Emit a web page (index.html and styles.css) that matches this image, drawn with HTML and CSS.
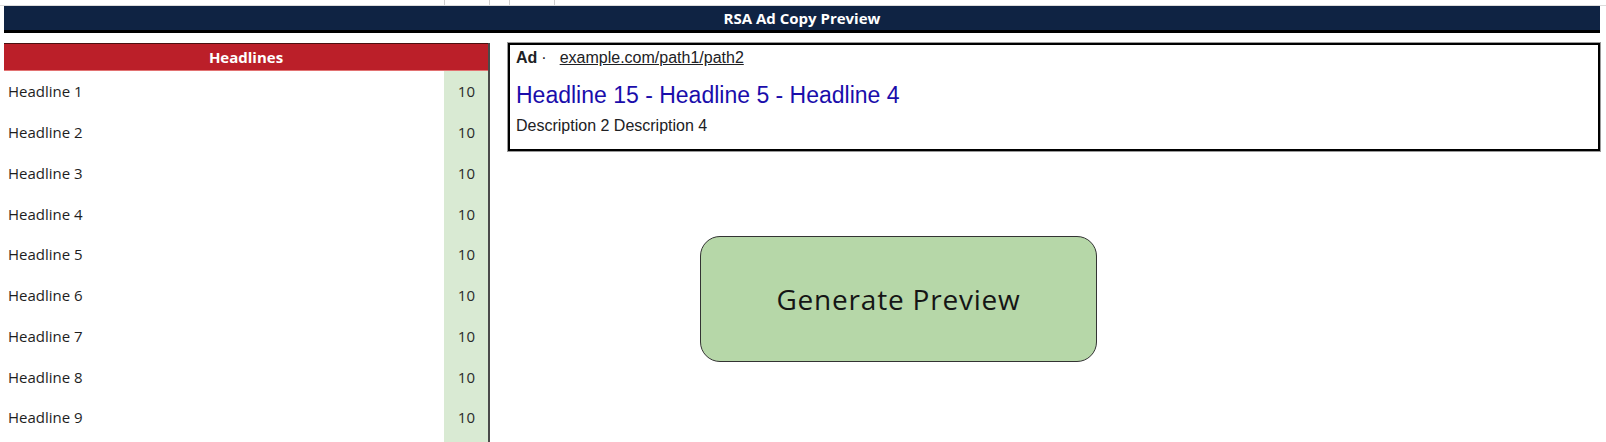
FILE: index.html
```html
<!DOCTYPE html>
<html>
<head>
<meta charset="utf-8">
<link rel="stylesheet" href="styles.css">
</head>
<body>
<div class="sheet">
  <div class="gridtop">
    <span class="gcell g1"></span><span class="gcell g2"></span><span class="gcell g3"></span><span class="gcell g4"></span><span class="gcell g5"></span>
  </div>
  <header class="titlebar">RSA Ad Copy Preview</header>
  <div class="main">
    <section class="headlines">
      <div class="hl-head">Headlines</div>
      <div class="hl-row"><span class="hl-name">Headline 1</span><span class="hl-count">10</span></div>
      <div class="hl-row"><span class="hl-name">Headline 2</span><span class="hl-count">10</span></div>
      <div class="hl-row"><span class="hl-name">Headline 3</span><span class="hl-count">10</span></div>
      <div class="hl-row"><span class="hl-name">Headline 4</span><span class="hl-count">10</span></div>
      <div class="hl-row"><span class="hl-name">Headline 5</span><span class="hl-count">10</span></div>
      <div class="hl-row"><span class="hl-name">Headline 6</span><span class="hl-count">10</span></div>
      <div class="hl-row"><span class="hl-name">Headline 7</span><span class="hl-count">10</span></div>
      <div class="hl-row"><span class="hl-name">Headline 8</span><span class="hl-count">10</span></div>
      <div class="hl-row"><span class="hl-name">Headline 9</span><span class="hl-count">10</span></div>
      <div class="hl-row"><span class="hl-name"></span><span class="hl-count"></span></div>
    </section>
    <section class="preview">
      <div class="adbox">
        <div class="ad-top"><span class="ad-label">Ad</span><span class="ad-dot">·</span><span class="ad-url">example.com/path1/path2</span></div>
        <div class="ad-headline">Headline 15 - Headline 5 - Headline 4</div>
        <div class="ad-desc">Description 2 Description 4</div>
      </div>
      <div class="btn">Generate Preview</div>
    </section>
  </div>
</div>
</body>
</html>
```

FILE: styles.css
```css
html, body {
  margin: 0;
  padding: 0;
  height: 442px;
  overflow: hidden;
  background: #ffffff;
}

.sheet {
  width: 1606px;
  height: 442px;
  overflow: hidden;
}

.gridtop {
  height: 5px;
  display: flex;
  border-bottom: 1px solid #dcdcdc;
}

.gcell {
  height: 5px;
  border-right: 1px solid #cfcfcf;
  box-sizing: border-box;
}
.g1 { width: 445px; }
.g2 { width: 45px; }
.g3 { width: 20px; }
.g4 { width: 45px; }
.g5 { flex: 1; border-right: none; }

.titlebar {
  margin-left: 4px;
  width: 1596px;
  height: 24px;
  background: #0f2343;
  border-bottom: 3px solid #000000;
  color: #ffffff;
  font-family: "Open Sans", "Liberation Sans", sans-serif;
  font-weight: 700;
  font-size: 15px;
  display: flex;
  align-items: center;
  justify-content: center;
}

.main {
  display: flex;
  margin-top: 10px;
  padding-left: 4px;
  gap: 18px;
}

.headlines {
  width: 484px;
  height: 400px;
  border-right: 2px solid #4a4a4a;
  flex-shrink: 0;
  font-family: "Open Sans", "Liberation Sans", sans-serif;
}

.hl-head {
  height: 26px;
  background: #bb1f29;
  border-top: 1px solid #4a1010;
  border-bottom: 1px solid #e27272;
  color: #ffffff;
  font-weight: 700;
  font-size: 15px;
  display: flex;
  align-items: center;
  justify-content: center;
}

.hl-row {
  height: 40.75px;
  display: flex;
}

.hl-name {
  flex: 1;
  padding-left: 4px;
  display: flex;
  align-items: center;
  font-size: 15px;
  color: #1e1e1e;
}

.hl-count {
  width: 44px;
  box-sizing: border-box;
  background: #d9ead3;
  padding-right: 13px;
  display: flex;
  align-items: center;
  justify-content: flex-end;
  font-size: 15px;
  color: #2a2a2a;
}

.preview {
  flex: 1;
  margin-right: 6px;
  display: flex;
  flex-direction: column;
  align-items: flex-start;
}

.adbox {
  align-self: stretch;
  height: 104px;
  border: 2px solid #000000;
  box-shadow: 0 0 0 1px #9a9a9a;
  padding-left: 6px;
  font-family: "Liberation Sans", Arial, sans-serif;
  color: #202124;
}

.ad-top {
  display: flex;
  align-items: center;
  margin-top: 3px;
  height: 20px;
  font-size: 16px;
}

.ad-label {
  font-weight: 700;
}

.ad-dot {
  margin-left: 4px;
  margin-right: 13px;
}

.ad-url {
  text-decoration: underline;
}

.ad-headline {
  margin-top: 14px;
  line-height: 26px;
  height: 26px;
  font-size: 23px;
  color: #1a0dab;
}

.ad-desc {
  margin-top: 8px;
  line-height: 20px;
  font-size: 16px;
  color: #202124;
}

.btn {
  margin-left: 192px;
  margin-top: 85px;
  width: 397px;
  height: 126px;
  box-sizing: border-box;
  border: 1px solid #333333;
  border-radius: 20px;
  background: #b6d7a8;
  display: flex;
  align-items: center;
  justify-content: center;
  font-family: "Open Sans", "Liberation Sans", sans-serif;
  font-size: 28px;
  letter-spacing: 0.8px;
  color: #151515;
}
```
